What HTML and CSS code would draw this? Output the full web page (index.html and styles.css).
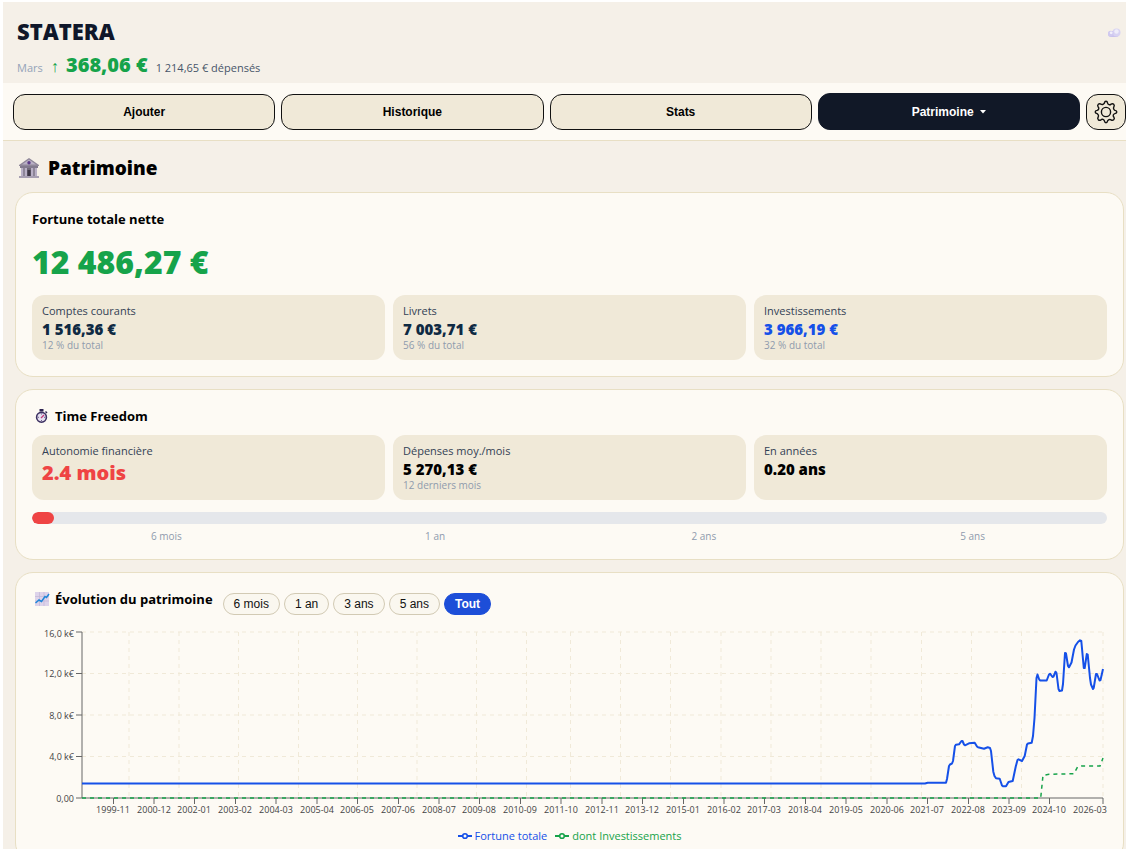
FILE: index.html
```
<!DOCTYPE html>
<html lang="fr">
<head>
<meta charset="utf-8">
<meta name="viewport" content="width=device-width, initial-scale=1">
<title>Statera</title>
<link rel="stylesheet" href="styles.css">
</head>
<body>
<div class="app">

<!-- header -->
<header class="header">
  <div>
    <h1 class="brand">STATERA</h1>
    <div class="month">
      <span class="month-name">Mars</span>
      <span class="month-total"><span class="month-arrow">↑</span> 368,06 €</span>
      <span class="month-spent">1 214,65 € dépensés</span>
    </div>
  </div>
  <svg class="cloud" viewBox="0 0 14 10" aria-hidden="true">
    <rect x="1" y="3" width="11" height="6" rx="3" fill="#c9c1ec"/>
    <circle cx="9.5" cy="4.5" r="4" fill="#d8d3f2"/>
    <circle cx="9.500" cy="3.500" r="2.200" fill="#efedfa"/>
    <circle cx="3.800" cy="5.600" r="2.800" fill="#d0c9f0"/>
    <circle cx="4.200" cy="4.800" r="1.400" fill="#f2f0fb"/>
  </svg>
</header>

<!-- tabs -->
<nav class="nav">
  <button class="tab">Ajouter</button>
  <button class="tab">Historique</button>
  <button class="tab">Stats</button>
  <button class="tab tab-active">Patrimoine <svg class="caret" viewBox="0 0 6 4" aria-hidden="true"><path d="M0 0h6L3 3.5z" fill="currentColor"/></svg></button>
  <button class="gear" aria-label="Réglages">
    <svg viewBox="0 0 24 24" width="24" height="24" fill="none" stroke="#111" stroke-width="1.4" stroke-linejoin="round">
      <circle cx="12" cy="12" r="4.6"/>
      <path d="M10.400 3.100Q10.700 1.200 12 1.200T13.600 3.100Q13.900 4.300 15 4.700T17 4.200Q18.600 3.100 19.700 4.300T19.800 7Q19.200 8 19.700 9T20.900 10.400Q22.800 10.700 22.800 12T20.900 13.600Q19.700 13.900 19.300 15T19.800 17Q20.900 18.600 19.700 19.700T17 19.800Q16 19.200 15 19.700T13.600 20.900Q13.300 22.800 12 22.800T10.400 20.900Q10.100 19.700 9 19.300T7 19.800Q5.400 20.900 4.300 19.700T4.200 17Q4.800 16 4.300 15T3.100 13.600Q1.200 13.300 1.200 12T3.100 10.400Q4.300 10.100 4.700 9T4.200 7Q3.100 5.400 4.300 4.300T7 4.200Q8 4.800 9 4.300T10.400 3.100z"/>
    </svg>
  </button>
</nav>

<main class="main">
  <h2 class="page-title">
    <svg class="bank" viewBox="0 0 22 22" aria-hidden="true">
      <path d="M1 8 11 1l10 7v1H1z" fill="#8f8799"/>
      <path d="M4 7.500 11 2.500l7 5z" fill="#b9b0c6"/>
      <circle cx="11" cy="5.800" r="1.700" fill="#5b3a86"/>
      <path d="M2 9h18v2H2z" fill="#827a8e"/>
      <path d="M3 11h16v8H3z" fill="#716a7a"/>
      <path d="M3 11h2.400v8H3zM6.600 11H9v8H6.600zM13 11h2.400v8H13zM16.600 11H19v8h-2.400z" fill="#b9b0c6"/>
      <path d="M9.500 13h3v6h-3z" fill="#3d3645"/>
      <path d="M1 19h20v2H1z" fill="#a79fb2"/>
    </svg>
    Patrimoine
  </h2>

  <!-- net worth -->
  <section class="card">
    <h3 class="card-title card-title-lead">Fortune totale nette</h3>
    <div class="total">12 486,27 €</div>
    <div class="tiles">
      <div class="tile">
        <div class="tile-label">Comptes courants</div>
        <div class="tile-value navy">1 516,36 €</div>
        <div class="tile-sub">12 % du total</div>
      </div>
      <div class="tile">
        <div class="tile-label">Livrets</div>
        <div class="tile-value navy">7 003,71 €</div>
        <div class="tile-sub">56 % du total</div>
      </div>
      <div class="tile">
        <div class="tile-label">Investissements</div>
        <div class="tile-value blue">3 966,19 €</div>
        <div class="tile-sub">32 % du total</div>
      </div>
    </div>
  </section>

  <!-- time freedom -->
  <section class="card">
    <h3 class="card-title">
      <svg class="emoji" viewBox="0 0 16 16" aria-hidden="true">
        <path d="M5.500 1h4v2.500h-4z" fill="#2f2452"/>
        <path d="m11.500 3.500 1.500 1.500" stroke="#2f2452" stroke-width="1.400"/>
        <circle cx="7.500" cy="9.300" r="4.900" fill="#e6e0f0" stroke="#3d3162" stroke-width="1.600"/>
        <path d="M7.500 5.500v1M7.500 12v1M4 9.300h1M10 9.300h1" stroke="#6f6590"/>
        <path d="m7 10 3-3" stroke="#c0397a" stroke-width="1.300"/>
      </svg>
      Time Freedom
    </h3>
    <div class="tiles">
      <div class="tile">
        <div class="tile-label">Autonomie financière</div>
        <div class="tile-value tile-big">2.4 mois</div>
      </div>
      <div class="tile">
        <div class="tile-label">Dépenses moy./mois</div>
        <div class="tile-value">5 270,13 €</div>
        <div class="tile-sub">12 derniers mois</div>
      </div>
      <div class="tile">
        <div class="tile-label">En années</div>
        <div class="tile-value">0.20 ans</div>
      </div>
    </div>
    <div class="gauge"><div class="gauge-fill" style="width: 2%"></div></div>
    <div class="gauge-marks">
      <span>6 mois</span>
      <span>1 an</span>
      <span>2 ans</span>
      <span>5 ans</span>
    </div>
  </section>

  <!-- chart -->
  <section class="card">
    <div class="chart-head">
      <h3 class="card-title">
        <svg class="emoji" viewBox="0 0 16 16" aria-hidden="true">
          <path d="M1 1h14v14H1z" fill="#ddd3ea"/>
          <path d="M1 5.500h14M1 10h14M5.500 1v14M10 1v14" stroke="#c3b6d6" stroke-width=".7"/>
          <path d="m1.500 12 3.500-3 2.500 1.500L11 5.500l1.500 1L15 3" fill="none" stroke="#1f86d8" stroke-width="1.500"/>
        </svg>
        Évolution du patrimoine
      </h3>
      <div class="ranges">
        <button class="range">6 mois</button>
        <button class="range">1 an</button>
        <button class="range">3 ans</button>
        <button class="range">5 ans</button>
        <button class="range range-active">Tout</button>
      </div>
    </div>
    <svg class="chart" viewBox="0 0 1075 198" role="img" aria-label="Évolution du patrimoine">
      <path class="grid" d="M50 8H1071M50 49.500H1071M50 91H1071M50 132.500H1071M97 8V174M147 8V174M206.500 8V174M266.500 8V174M325.500 8V174M385 8V174M444.500 8V174M494.500 8V174M538.500 8V174M588.500 8V174M638.500 8V174M689 8V174M739 8V174M789 8V174M839 8V174M889.500 8V174M939.500 8V174M989.500 8V174M1071 8V174"/>
      <path class="axis" d="M50 8V174M44 8H50M44 49.500H50M44 91H50M44 132.500H50M44 174H1071"/>
      <path class="axis" d="M81.500 174v6M122 174v6M162.500 174v6M203.500 174v6M244 174v6M285 174v6M325.500 174v6M366.500 174v6M407 174v6M447.500 174v6M488.500 174v6M529 174v6M570 174v6M610.500 174v6M651.500 174v6M692 174v6M732.500 174v6M773.500 174v6M814 174v6M855 174v6M895.500 174v6M936.500 174v6M977 174v6M1017.500 174v6M1071 174v6"/>
      <g class="tick tick-y">
        <text x="42" y="13">16,0 k€</text>
        <text x="42" y="53">12,0 k€</text>
        <text x="42" y="95">8,0 k€</text>
        <text x="42" y="136">4,0 k€</text>
        <text x="42" y="178">0,00</text>
      </g>
      <g class="tick tick-x">
        <text x="81" y="189">1999-11</text>
        <text x="122" y="189">2000-12</text>
        <text x="162" y="189">2002-01</text>
        <text x="203" y="189">2003-02</text>
        <text x="244" y="189">2004-03</text>
        <text x="285" y="189">2005-04</text>
        <text x="325" y="189">2006-05</text>
        <text x="366" y="189">2007-06</text>
        <text x="407" y="189">2008-07</text>
        <text x="447" y="189">2009-08</text>
        <text x="488" y="189">2010-09</text>
        <text x="529" y="189">2011-10</text>
        <text x="570" y="189">2012-11</text>
        <text x="610" y="189">2013-12</text>
        <text x="651" y="189">2015-01</text>
        <text x="692" y="189">2016-02</text>
        <text x="732" y="189">2017-03</text>
        <text x="773" y="189">2018-04</text>
        <text x="814" y="189">2019-05</text>
        <text x="855" y="189">2020-06</text>
        <text x="895" y="189">2021-07</text>
        <text x="936" y="189">2022-08</text>
        <text x="977" y="189">2023-09</text>
        <text x="1017" y="189">2024-10</text>
        <text x="1058" y="189">2026-03</text>
      </g>
      <polyline class="line-invest" points="50,174 1008.700,174 1011,151.300 1017,150.300 1042,149.700 1045.700,142.700 1049.700,142 1068,142 1071,134"/>
      <polyline class="line-total" points="50,159.500 893,159.500 895.700,158.700 914,158.700 915,155 917,142 918,140.500 920,139.500 921,137 923,122 924,120.700 927,120.300 929.500,117 930.500,117 932,120.500 933,121.300 937,119.300 942.700,118.700 945,122.500 946,123.300 952,124.700 955.700,123.300 958,124 959,127 961.300,147.700 962.500,152 964,154.300 967.700,154.700 970,161.500 971,162.300 974,162.300 976.500,158 980.700,157 983.700,142.700 985.500,136 986.500,135.300 990,137 992.700,132 995,120.500 996,119.500 999.700,118.700 1001,112 1002.500,94 1004.500,54 1005.500,50.500 1007,55 1008,56.500 1014.700,56.500 1017,50.500 1018,49.700 1020.500,53 1021.500,52.500 1023.500,47.700 1024.500,49 1026.500,65 1027.500,67 1030,66.500 1031,60 1033,29 1034,29.500 1036,42 1037,43.300 1039.500,38.500 1042,25.500 1043.500,21.500 1046,18 1048,16.300 1049.300,17 1051.800,44 1052.700,44 1054.800,30 1055.700,30.500 1058,54 1059,60.500 1061,65 1061.700,64 1064,50 1065,50 1067.500,56.500 1068.500,56 1071,45"/>
    </svg>
    <div class="legend">
      <span class="legend-item blue">
        <svg width="14" height="14" viewBox="0 0 14 14" aria-hidden="true"><path d="M0 7h14" stroke="currentColor" stroke-width="2"/><circle cx="7" cy="7" r="2.300" fill="#fdfaf4" stroke="currentColor" stroke-width="1.600"/></svg>
        Fortune totale
      </span>
      <span class="legend-item green">
        <svg width="14" height="14" viewBox="0 0 14 14" aria-hidden="true"><path d="M0 7h14" stroke="currentColor" stroke-width="2"/><circle cx="7" cy="7" r="2.300" fill="#fdfaf4" stroke="currentColor" stroke-width="1.600"/></svg>
        dont Investissements
      </span>
    </div>
  </section>
</main>

</div>
</body>
</html>
```
FILE: styles.css
```
* {
  box-sizing: border-box;
}
body {
  margin: 2px 0 0 3px;
  background: #fff;
  color: #000;
  font-family: "Open Sans", "Noto Sans", sans-serif;
  overflow-x: hidden;
}
h1, h2, h3 {
  margin: 0;
}
button {
  font-family: "Liberation Sans", Arial, sans-serif;
  cursor: pointer;
}
.app {
  background: #f5f0e8;
}

/* header */
.header {
  display: flex;
  justify-content: space-between;
  padding: 15px 5px 2px 14px;
}
.brand {
  font-size: 22px;
  line-height: 28px;
  font-weight: 800;
  color: #0f172a;
}
.month {
  display: flex;
  align-items: baseline;
  gap: 8px;
  margin-top: 7px;
  line-height: 26px;
}
.month-name {
  font-size: 11px;
  color: #94a3b8;
}
.month-arrow {
  margin-right: 2px;
  font-size: 16px;
  font-weight: 400;
}
.month-total {
  font-size: 20px;
  font-weight: 800;
  color: #16a34a;
}
.month-spent {
  font-size: 11px;
  color: #475569;
}
.cloud {
  width: 14px;
  height: 10px;
  margin-top: 11px;
}

/* tabs */
.nav {
  display: flex;
  align-items: flex-end;
  gap: 6px;
  padding: 10px 0 10px 10px;
  background: #fdfaf4;
  border-bottom: 1px solid #e8dfc4;
}
.tab {
  flex: 1;
  height: 36px;
  padding: 0;
  border: 1px solid #111;
  border-radius: 12px;
  background: #f0e9d8;
  color: #000;
  font-size: 12px;
  font-weight: 700;
}
.tab-active {
  height: 37px;
  background: #111827;
  border-color: #111827;
  color: #fff;
}
.caret {
  width: 6px;
  height: 4px;
  margin-left: 3px;
  vertical-align: 2px;
}
.gear {
  display: flex;
  align-items: center;
  justify-content: center;
  width: 40px;
  height: 36px;
  padding: 0;
  border: 1px solid #111;
  border-radius: 12px;
  background: #f0e9d8;
}

/* content */
.main {
  padding: 12px 2px 12px 12px;
}
.page-title {
  display: flex;
  align-items: center;
  gap: 8px;
  margin-bottom: 9px;
  padding-left: 3px;
  font-size: 19px;
  line-height: 30px;
  font-weight: 800;
}
.bank {
  width: 22px;
  height: 22px;
}
.card {
  margin-bottom: 12px;
  padding: 16px;
  background: #fdfaf4;
  border: 1px solid #e8dfc4;
  border-radius: 18px;
}
.card-title {
  display: flex;
  align-items: center;
  gap: 5px;
  margin-bottom: 9px;
  font-size: 13px;
  line-height: 20px;
  font-weight: 700;
}
.card-title-lead {
  margin-bottom: 11px;
}
.emoji {
  width: 16px;
  height: 16px;
  margin-left: 2px;
}
.total {
  margin-bottom: 11px;
  font-size: 32px;
  line-height: 44px;
  font-weight: 800;
  color: #16a34a;
}
.tiles {
  display: grid;
  grid-template-columns: repeat(3, 1fr);
  gap: 8px;
}
.tile {
  padding: 8px 10px;
  background: #f0e9d8;
  border-radius: 12px;
}
.tile-label {
  font-size: 11px;
  line-height: 16px;
  color: #334155;
}
.tile-value {
  font-size: 15px;
  line-height: 20px;
  font-weight: 800;
}
.tile-big {
  font-size: 20px;
  line-height: 28px;
  color: #ef4444;
}
.tile-sub {
  font-size: 10px;
  line-height: 13px;
  color: #8f9bad;
}
.navy {
  color: #0f2a43;
}
.blue {
  color: #1550e8;
}
.green {
  color: #16a34a;
}

/* gauge */
.gauge {
  height: 12px;
  margin-top: 12px;
  background: #e5e7eb;
  border-radius: 6px;
  overflow: hidden;
}
.gauge-fill {
  height: 12px;
  background: #ef4444;
  border-radius: 6px;
}
.gauge-marks {
  display: flex;
  margin-top: 6px;
  font-size: 10px;
  line-height: 13px;
  color: #8f9bad;
}
.gauge-marks span {
  flex: 1;
  text-align: center;
}

/* chart */
.chart-head {
  display: flex;
  align-items: flex-start;
  flex-wrap: wrap;
  gap: 10px;
  margin-bottom: 9px;
}
.chart-head .card-title {
  margin-bottom: 0;
}
.ranges {
  display: flex;
  gap: 4px;
  margin-top: 4px;
}
.range {
  height: 22px;
  padding: 0 10px;
  border: 1px solid #d2cab4;
  border-radius: 11px;
  background: #faf7ef;
  color: #111;
  font-size: 12px;
}
.range-active {
  background: #1d4ed8;
  border-color: #1d4ed8;
  color: #fff;
  font-weight: 700;
}
.chart {
  display: block;
  width: 100%;
  overflow: hidden;
}
.grid {
  fill: none;
  stroke: #f0e9d8;
  stroke-dasharray: 4 4;
}
.axis {
  fill: none;
  stroke: #666;
}
.tick {
  font-size: 9px;
  fill: #444;
}
.tick-y {
  text-anchor: end;
}
.tick-x {
  text-anchor: middle;
}
.line-total {
  fill: none;
  stroke: #1550e8;
  stroke-width: 2;
  stroke-linejoin: round;
}
.line-invest {
  fill: none;
  stroke: #16a34a;
  stroke-width: 1.5;
  stroke-dasharray: 4 4;
}
.legend {
  display: flex;
  justify-content: center;
  gap: 8px;
  margin-top: 6px;
  font-size: 11px;
  line-height: 16px;
}
.legend-item {
  display: flex;
  align-items: center;
  gap: 3px;
}
```
